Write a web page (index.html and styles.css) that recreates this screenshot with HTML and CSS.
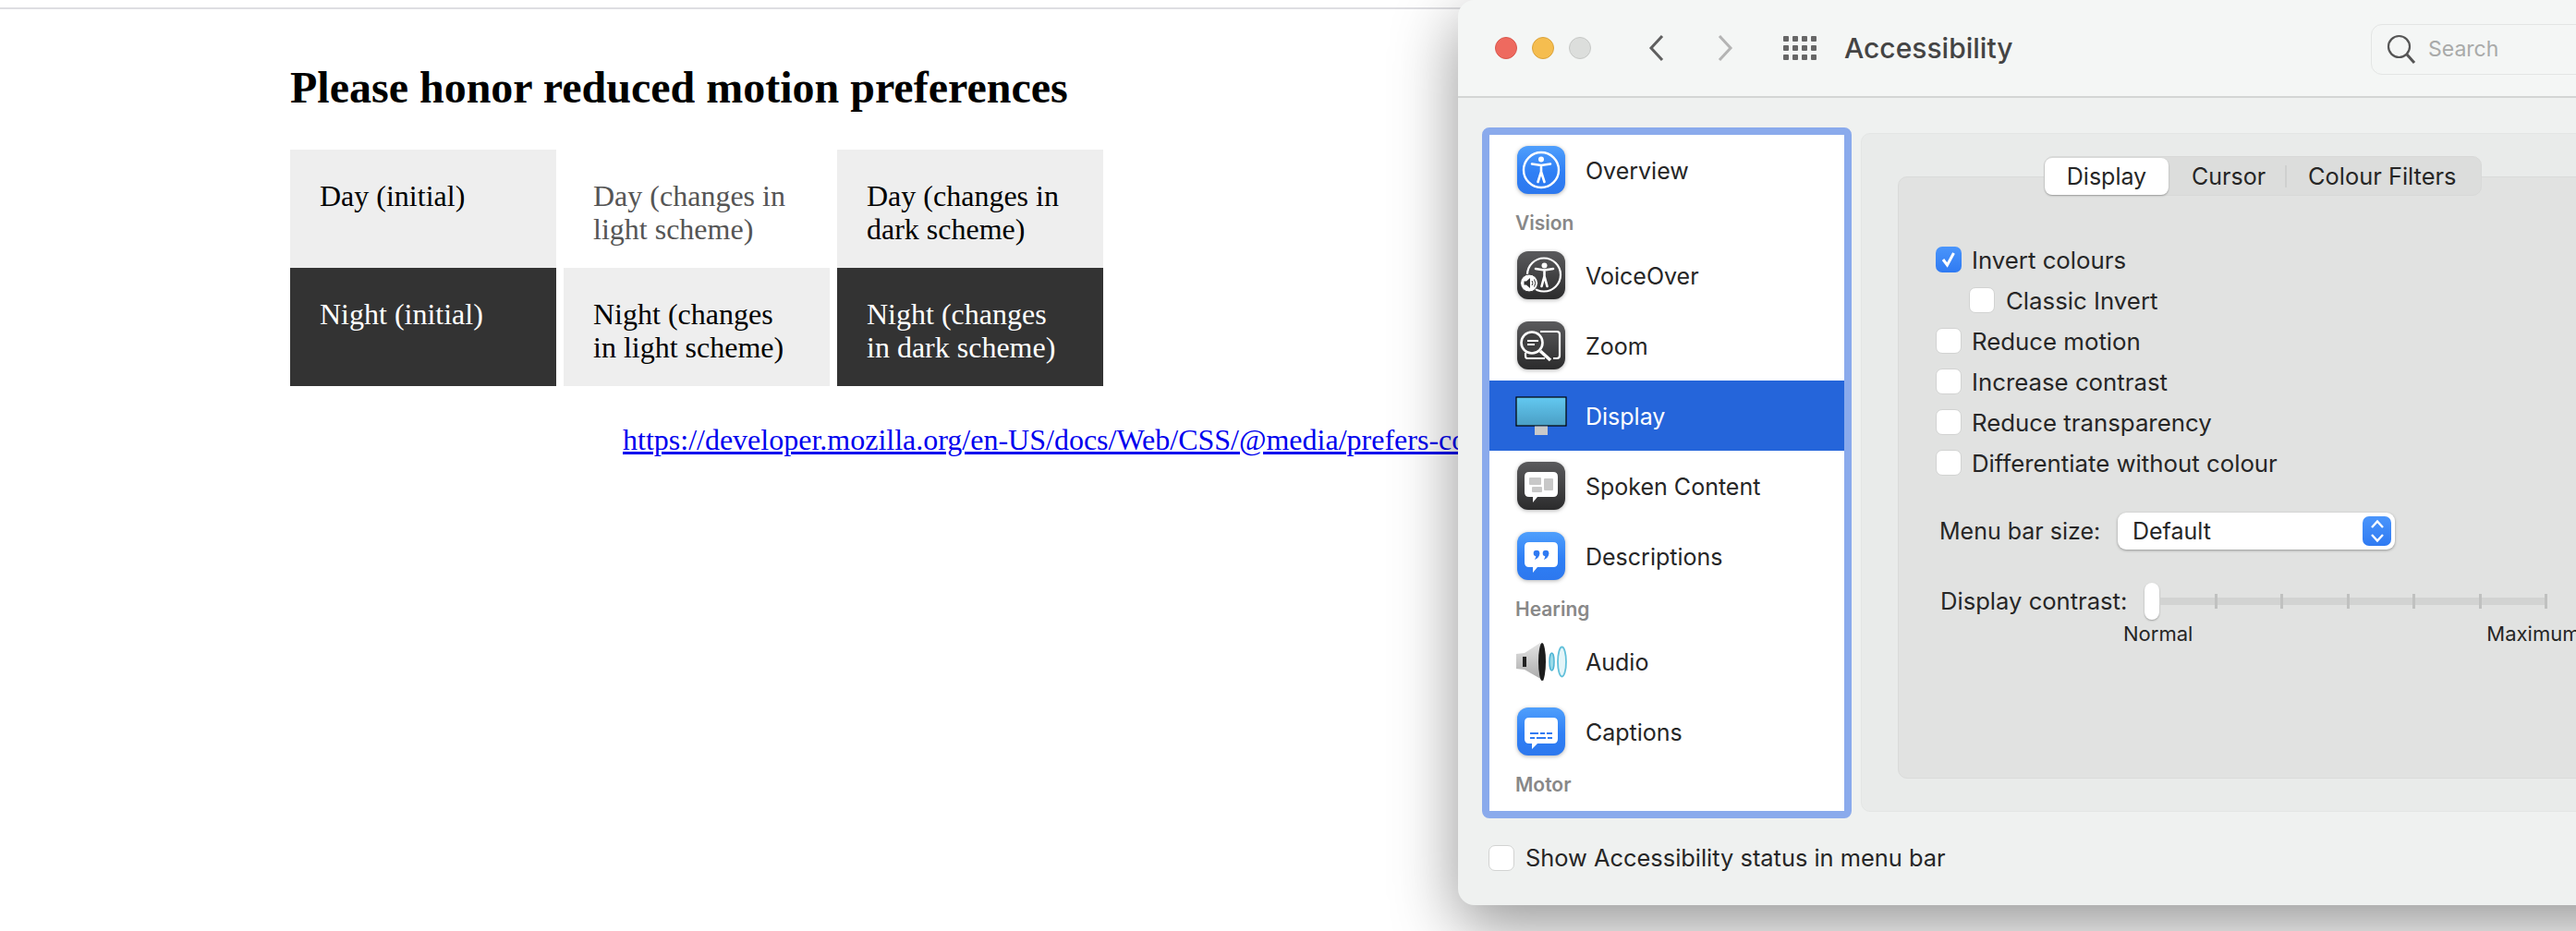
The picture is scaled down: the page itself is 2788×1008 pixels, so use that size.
FILE: index.html
```html
<!DOCTYPE html>
<html>
<head>
  <meta charset="utf-8">
  <title>Please honor reduced motion preferences</title>
  <link rel="stylesheet" href="styles.css">
</head>

<body>
  <div class="top-line"></div>

  <div class="page">
    <h1>Please honor reduced motion preferences</h1>
    <div class="scheme-table">
      <div class="cell grey">Day (initial)</div>
      <div class="cell faded">Day (changes in light scheme)</div>
      <div class="cell grey">Day (changes in dark scheme)</div>
      <div class="cell dark">Night (initial)</div>
      <div class="cell grey">Night (changes in light scheme)</div>
      <div class="cell dark">Night (changes in dark scheme)</div>
    </div>
    <p class="source"><a href="#">https://developer.mozilla.org/en-US/docs/Web/CSS/@media/prefers-color-scheme</a></p>
  </div>

  <!-- System Preferences window, sits over the page -->
  <div class="window">
    <div class="titlebar">
      <span class="dot red"></span>
      <span class="dot yellow"></span>
      <span class="dot grey-dot"></span>
      <svg class="chevron back" width="20" height="30" viewBox="0 0 20 30"><path d="M16 2 L4 15 L16 28" fill="none" stroke="#5f5f5f" stroke-width="3"/></svg>
      <svg class="chevron forward" width="20" height="30" viewBox="0 0 20 30"><path d="M4 2 L16 15 L4 28" fill="none" stroke="#b4b4b4" stroke-width="3"/></svg>
      <svg class="apps" width="36" height="26" viewBox="0 0 36 26" fill="#666">
        <rect x="0" y="0" width="6" height="6" rx="1"/><rect x="10" y="0" width="6" height="6" rx="1"/><rect x="20" y="0" width="6" height="6" rx="1"/><rect x="30" y="0" width="6" height="6" rx="1"/>
        <rect x="0" y="10" width="6" height="6" rx="1"/><rect x="10" y="10" width="6" height="6" rx="1"/><rect x="20" y="10" width="6" height="6" rx="1"/><rect x="30" y="10" width="6" height="6" rx="1"/>
        <rect x="0" y="20" width="6" height="6" rx="1"/><rect x="10" y="20" width="6" height="6" rx="1"/><rect x="20" y="20" width="6" height="6" rx="1"/><rect x="30" y="20" width="6" height="6" rx="1"/>
      </svg>
      <div class="title">Accessibility</div>
      <div class="search">
        <svg width="32" height="32" viewBox="0 0 32 32"><circle cx="13.5" cy="13.5" r="11.5" fill="none" stroke="#555" stroke-width="2.2"/><path d="M22 22 L30 31" stroke="#555" stroke-width="3" fill="none"/></svg>
        <span>Search</span>
      </div>
    </div>

    <div class="win-body">
      <div class="sidebar">
        <div class="item">
          <svg class="icon" viewBox="0 0 52 52">
            <rect width="52" height="52" rx="12" fill="url(#blue)"/>
            <circle cx="26" cy="26" r="19" fill="none" stroke="#fff" stroke-width="2.4"/>
            <circle cx="26" cy="14.5" r="3" fill="#fff"/>
            <path d="M16 19.5 L26 21 L36 19.5 M26 21 V29 M26 28 L22.5 39 M26 28 L29.5 39" fill="none" stroke="#fff" stroke-width="2.6" stroke-linecap="round"/>
          </svg>
          <span>Overview</span>
        </div>
        <div class="group">Vision</div>
        <div class="item">
          <svg class="icon" viewBox="0 0 52 52">
            <rect width="52" height="52" rx="12" fill="url(#dark)"/>
            <circle cx="29" cy="25.500" r="18" fill="none" stroke="#fff" stroke-width="2.2"/>
            <circle cx="29.500" cy="15.500" r="3" fill="#fff"/>
            <path d="M20 19 L29.500 20.500 L39 19 M29.500 20.500 V28 M29.500 27 L26.500 38 M29.500 27 L32.500 38" fill="none" stroke="#fff" stroke-width="2.6" stroke-linecap="round"/>
            <circle cx="13" cy="34.500" r="9.500" fill="#fff" stroke="#3a3a3a" stroke-width="1"/>
            <path d="M7.500 32.500 H10 L14 29 V40 L10 36.500 H7.500 Z" fill="#333"/>
            <path d="M16 32 Q18 34.500 16 37 M18.500 30.500 Q21 34.500 18.500 38.500" fill="none" stroke="#333" stroke-width="1"/>
          </svg>
          <span>VoiceOver</span>
        </div>
        <div class="item">
          <svg class="icon" viewBox="0 0 52 52">
            <rect width="52" height="52" rx="12" fill="url(#dark)"/>
            <path d="M25 11 H43 Q46 11 46 14 V37 Q46 40 43 40 H39 M30 40 H11 Q9 40 9 37 V34" fill="none" stroke="#fff" stroke-width="2.2"/>
            <circle cx="16" cy="23" r="11.500" fill="#3f3f40" stroke="#fff" stroke-width="2.600"/>
            <path d="M11 21 H23 M11 25 H19" stroke="#fff" stroke-width="2"/>
            <path d="M25 32 L36 42" stroke="#fff" stroke-width="3.500"/>
          </svg>
          <span>Zoom</span>
        </div>
        <div class="item selected">
          <svg class="icon wide" viewBox="0 0 52 52">
            <rect x="-1" y="6" width="54" height="31" fill="url(#sky)" stroke="#000" stroke-width="1.200"/>
            <rect x="19" y="37.500" width="14" height="9.500" fill="#c9c9c9"/>
          </svg>
          <span>Display</span>
        </div>
        <div class="item">
          <svg class="icon" viewBox="0 0 52 52">
            <rect width="52" height="52" rx="12" fill="url(#dark)"/>
            <path d="M13 11 H39 Q44 11 44 16 V33 Q44 38 39 38 H22 L17 44 V38 H13 Q8 38 8 33 V16 Q8 11 13 11 Z" fill="#fff"/>
            <rect x="13" y="17" width="13" height="8" rx="1" fill="#c8c8c8"/>
            <rect x="29" y="18" width="10" height="13" rx="1" fill="#c8c8c8"/>
            <rect x="16" y="27" width="11" height="6" rx="1" fill="#c8c8c8"/>
          </svg>
          <span>Spoken Content</span>
        </div>
        <div class="item">
          <svg class="icon" viewBox="0 0 52 52">
            <rect width="52" height="52" rx="12" fill="url(#blue)"/>
            <path d="M13 11 H39 Q44 11 44 16 V33 Q44 38 39 38 H22 L17 44 V38 H13 Q8 38 8 33 V16 Q8 11 13 11 Z" fill="#fff"/>
            <circle cx="21" cy="23" r="3.300" fill="#2f7af2"/>
            <circle cx="31" cy="23" r="3.300" fill="#2f7af2"/>
            <path d="M24.300 23 Q24.300 28 19 30 Q21 27 20 25 Z M34.300 23 Q34.300 28 29 30 Q31 27 30 25 Z" fill="#2f7af2"/>
          </svg>
          <span>Descriptions</span>
        </div>
        <div class="group">Hearing</div>
        <div class="item">
          <svg class="icon wide" viewBox="0 -6 52 52">
            <defs>
              <linearGradient id="cone" x1="0" y1="0" x2="0" y2="1"><stop offset="0" stop-color="#e4e4e4"/><stop offset="1" stop-color="#a9a9a9"/></linearGradient>
            </defs>
            <path d="M-1 12 L8 11 L25 0 L29 41 L8 29 L-1 28 Z" fill="url(#cone)"/>
            <rect x="6" y="15" width="4" height="11" fill="#222"/>
            <ellipse cx="27" cy="20.500" rx="4" ry="20.500" fill="#1c1c1c"/>
            <ellipse cx="37.500" cy="20.500" rx="2.500" ry="9.500" fill="#9adbea" stroke="#4fb4d4" stroke-width="1.500"/>
            <ellipse cx="48.500" cy="20.500" rx="4.500" ry="16" fill="#e4f5f9" stroke="#62c0da" stroke-width="1.800"/>
          </svg>
          <span>Audio</span>
        </div>
        <div class="item">
          <svg class="icon" viewBox="0 0 52 52">
            <rect width="52" height="52" rx="12" fill="url(#blue)"/>
            <path d="M13 11 H39 Q44 11 44 16 V34 Q44 39 39 39 H22 L16 45 V39 H13 Q8 39 8 34 V16 Q8 11 13 11 Z" fill="#fff"/>
            <path d="M14 28 H23 M25 28 H30 M32 28 H38 M14 33 H19 M21 33 H31 M33 33 H38" stroke="#2f7af2" stroke-width="1.800"/>
          </svg>
          <span>Captions</span>
        </div>
        <div class="group">Motor</div>
      </div>

      <div class="panel">
        <div class="box">
          <div class="tabs">
            <div class="tab active">Display</div>
            <div class="tab cursor">Cursor</div>
            <div class="tab-sep"></div>
            <div class="tab filters">Colour Filters</div>
          </div>

          <div class="options">
            <div class="option"><span class="check on"><svg width="20" height="20" viewBox="0 0 20 20"><path d="M4 10 L8.500 16 L15.500 3" fill="none" stroke="#fff" stroke-width="3"/></svg></span>Invert colours</div>
            <div class="option sub"><span class="check"></span>Classic Invert</div>
            <div class="option"><span class="check"></span>Reduce motion</div>
            <div class="option"><span class="check"></span>Increase contrast</div>
            <div class="option"><span class="check"></span>Reduce transparency</div>
            <div class="option"><span class="check"></span>Differentiate without colour</div>
          </div>

          <div class="menu-size">
            <span class="menu-label">Menu bar size:</span>
            <div class="select">
              <span>Default</span>
              <span class="stepper"><svg width="20" height="28" viewBox="0 0 20 28"><path d="M4 10 L10 3.500 L16 10 M4 18 L10 24.500 L16 18" fill="none" stroke="#fff" stroke-width="2.400"/></svg></span>
            </div>
          </div>

          <div class="contrast">
            <span class="contrast-label">Display contrast:</span>
            <div class="slider">
              <span class="thumb"></span>
              <div class="track">
                <i></i><i></i><i></i><i></i><i></i><i></i>
              </div>
            </div>
          </div>
          <div class="scale">
            <span>Normal</span>
            <span class="scale-max">Maximum</span>
          </div>
        </div>
      </div>
    </div>

    <div class="status-row"><span class="check"></span>Show Accessibility status in menu bar</div>
  </div>

  <!-- shared gradients for the icons -->
  <svg class="defs" width="0" height="0">
    <defs>
      <linearGradient id="blue" x1="0" y1="0" x2="0" y2="1"><stop offset="0" stop-color="#4f9ffc"/><stop offset="0.55" stop-color="#2f7ff5"/><stop offset="1" stop-color="#2d78ee"/></linearGradient>
      <linearGradient id="dark" x1="0" y1="0" x2="0" y2="1"><stop offset="0" stop-color="#5a5a5c"/><stop offset="1" stop-color="#2b2b2c"/></linearGradient>
      <linearGradient id="sky" x1="0" y1="0" x2="0" y2="1"><stop offset="0" stop-color="#63c9f1"/><stop offset="1" stop-color="#4a9ec4"/></linearGradient>
    </defs>
  </svg>
</body>
</html>
```

FILE: styles.css
```css
html, body {
  margin: 0;
  height: 100%;
  overflow: hidden;
  background: #fff;
}

body {
  position: relative;
  font-family: "Liberation Serif", serif;
}

.top-line {
  margin-top: 8px;
  height: 2px;
  background: #dedee2;
}

/* the web page behind the window */
.page {
  padding-left: 314px;
}

h1 {
  margin: 0;
  padding-top: 58px;
  font-size: 48px;
  line-height: 54px;
  font-weight: bold;
  color: #000;
}

.scheme-table {
  margin-top: 40px;
  display: grid;
  grid-template-columns: repeat(3, 288px);
  grid-auto-rows: 128px;
  column-gap: 8px;
}

.cell {
  padding: 32px 32px 0;
  font-size: 32px;
  line-height: 36px;
  color: #000;
}

.grey {
  background: #eee;
}

.faded {
  color: #555;
}

.dark {
  background: #333;
  color: #fff;
}

.source {
  margin: 40px 0 0 360px;
  font-size: 32px;
  line-height: 36px;
  white-space: nowrap;
}

.source a {
  color: #00e;
}

/* window */
.window {
  position: absolute;
  left: 1578px;
  top: 0;
  width: 1400px;
  height: 980px;
  background: #eff1f0;
  border-radius: 18px;
  box-shadow: 0 22px 70px rgba(0, 0, 0, 0.42);
  font-family: Inter, "Noto Sans", sans-serif;
  font-size: 25px;
  color: #262626;
  overflow: hidden;
}

.titlebar {
  height: 104px;
  display: flex;
  align-items: center;
  padding-left: 40px;
  background: #f4f6f5;
  border-bottom: 2px solid #d3d5d4;
}

.dot {
  width: 24px;
  height: 24px;
  margin-right: 16px;
  border-radius: 50%;
  box-sizing: border-box;
}

.red {
  background: #ee6a5f;
  border: 1px solid #d9574d;
}

.yellow {
  background: #f5bd4f;
  border: 1px solid #dba33b;
}

.grey-dot {
  background: #dcdedc;
  border: 1px solid #c6c8c6;
}

.chevron.back {
  margin-left: 45px;
}

.chevron.forward {
  margin-left: 54px;
}

.apps {
  margin-left: 53px;
}

.title {
  margin-left: 30px;
  width: 570px;
  font-size: 30px;
  font-weight: 500;
  color: #444;
}

.search {
  width: 400px;
  height: 55px;
  margin-top: 2px;
  box-sizing: border-box;
  display: flex;
  align-items: center;
  gap: 13px;
  padding-left: 16px;
  border: 1px solid #e3e5e4;
  border-radius: 12px;
  color: #a9aaa9;
  font-size: 23px;
}

.win-body {
  display: flex;
  padding: 32px 0 0 26px;
  gap: 10px;
}

.sidebar {
  width: 400px;
  height: 748px;
  box-sizing: border-box;
  flex: none;
  border: 8px solid #8aaaec;
  border-radius: 8px;
  background: #fff;
  overflow: hidden;
}

.item {
  height: 76px;
  display: flex;
  align-items: center;
  gap: 22px;
  padding-left: 30px;
}

.item span {
  padding-top: 1px;
}

.icon {
  width: 52px;
  height: 52px;
  flex: none;
  filter: drop-shadow(0 1px 2px rgba(0, 0, 0, 0.3));
}

.icon.wide {
  overflow: visible;
  filter: none;
}

.selected {
  background: #2565da;
  color: #fff;
}

.group {
  height: 38px;
  line-height: 39px;
  padding-left: 28px;
  font-size: 21px;
  font-weight: 600;
  color: #888;
}

.panel {
  margin-top: 6px;
  width: 1000px;
  height: 735px;
  box-sizing: border-box;
  padding: 46px 0 0 39px;
  background: #e9ebea;
  border: 1px solid #e4e6e5;
  border-radius: 10px;
}

.box {
  height: 652px;
  box-sizing: border-box;
  background: #e1e2e1;
  border: 1px solid #dadbda;
  border-radius: 10px;
  padding-left: 40px;
}

.tabs {
  margin: -23px 0 0 117px;
  width: 474px;
  height: 43px;
  display: flex;
  align-items: center;
  background: #dcdddc;
  border: 1px solid #d8d9d8;
  border-radius: 10px;
  box-sizing: border-box;
  font-size: 25px;
}

.tab.active {
  width: 134px;
  height: 40px;
  line-height: 40px;
  text-align: center;
  background: #fff;
  border-radius: 8px;
  box-shadow: 0 1px 2px rgba(0, 0, 0, 0.3);
}

.tab.cursor {
  margin-left: 25px;
}

.tab-sep {
  width: 2px;
  height: 24px;
  margin: 0 23px 0 21px;
  background: #cfd0cf;
}

.tab.filters {
  font-size: 25.4px;
}

.options {
  margin-top: 47px;
  font-size: 25.8px;
}

.option {
  height: 44px;
  display: flex;
  align-items: center;
  gap: 11px;
}

.option.sub {
  padding-left: 36px;
  gap: 12px;
}

.check {
  width: 28px;
  height: 28px;
  box-sizing: border-box;
  flex: none;
  display: flex;
  align-items: center;
  justify-content: center;
  background: #fff;
  border: 1px solid #d2d3d2;
  border-radius: 7px;
}

.check.on {
  background: linear-gradient(#4a95fb, #2f7af2);
  border: 0;
}

.menu-size {
  margin: 32px 0 0 4px;
  display: flex;
  align-items: center;
}

.menu-label {
  width: 193px;
}

.select {
  width: 300px;
  height: 40px;
  box-sizing: border-box;
  display: flex;
  align-items: center;
  justify-content: space-between;
  padding: 0 4px 0 16px;
  background: #fff;
  border-radius: 9px;
  box-shadow: 0 1px 3px rgba(0, 0, 0, 0.35);
}

.stepper {
  width: 31px;
  height: 32px;
  display: flex;
  align-items: center;
  justify-content: center;
  background: linear-gradient(#4a95fb, #2f7af2);
  border-radius: 7px;
}

.contrast {
  margin: 36px 0 0 5px;
  display: flex;
  align-items: center;
}

.contrast-label {
  width: 221px;
  padding-bottom: 2px;
  font-size: 25.6px;
  white-space: nowrap;
}

.slider {
  width: 436px;
  height: 40px;
  display: flex;
  align-items: center;
}

.thumb {
  width: 16px;
  height: 40px;
  flex: none;
  background: #fff;
  border-radius: 8px;
  box-shadow: 0 1px 2px rgba(0, 0, 0, 0.3);
}

.track {
  flex: 1;
  height: 8px;
  padding-left: 60px;
  display: flex;
  align-items: center;
  justify-content: space-between;
  background: #d2d3d2;
}

.track i {
  width: 3px;
  height: 16px;
  background: #c0c1c0;
}

.scale {
  margin: 2px 0 0 203px;
  display: flex;
  font-size: 22px;
  line-height: 26px;
}

.scale-max {
  margin-left: 318px;
}

.status-row {
  margin: 27px 0 0 33px;
  display: flex;
  align-items: center;
  gap: 12px;
  font-size: 25.4px;
}

.defs {
  position: absolute;
}
```
